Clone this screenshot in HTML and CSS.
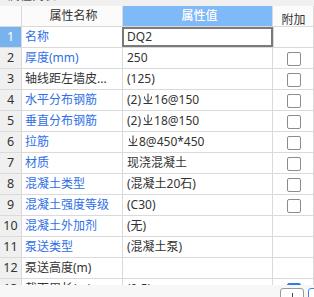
FILE: index.html
```html
<!DOCTYPE html>
<html>
<head>
<meta charset="utf-8">
<link rel="stylesheet" href="styles.css">
</head>
<body>
<div class="panel">
  <div class="title"><span>属性列表</span></div>
  <div class="grid">
    <div class="row head">
      <div class="c num"></div>
      <div class="c name center">属性名称</div>
      <div class="c val center sel">属性值</div>
      <div class="c add center">附加</div>
    </div>
    <div class="row">
      <div class="c num active">1</div>
      <div class="c name blue">名称</div>
      <div class="c val editing">DQ2</div>
      <div class="c add"></div>
    </div>
    <div class="row">
      <div class="c num">2</div>
      <div class="c name blue">厚度(mm)</div>
      <div class="c val">250</div>
      <div class="c add"><span class="cb"></span></div>
    </div>
    <div class="row">
      <div class="c num">3</div>
      <div class="c name">轴线距左墙皮...</div>
      <div class="c val">(125)</div>
      <div class="c add"><span class="cb"></span></div>
    </div>
    <div class="row">
      <div class="c num">4</div>
      <div class="c name blue">水平分布钢筋</div>
      <div class="c val">(2)<svg class="rb" viewBox="0 0 10 12"><path d="M5 0.5V10.5M1.5 3.5Q1.5 8 5 8Q8.5 8 8.5 3.5M0.5 10.5H9.5"/></svg>16@150</div>
      <div class="c add"><span class="cb"></span></div>
    </div>
    <div class="row">
      <div class="c num">5</div>
      <div class="c name blue">垂直分布钢筋</div>
      <div class="c val">(2)<svg class="rb" viewBox="0 0 10 12"><path d="M5 0.5V10.5M1.5 3.5Q1.5 8 5 8Q8.5 8 8.5 3.5M0.5 10.5H9.5"/></svg>18@150</div>
      <div class="c add"><span class="cb"></span></div>
    </div>
    <div class="row">
      <div class="c num">6</div>
      <div class="c name blue">拉筋</div>
      <div class="c val"><svg class="rb first" viewBox="0 0 10 12"><path d="M5 0.5V10.5M1.5 3.5Q1.5 8 5 8Q8.5 8 8.5 3.5M0.5 10.5H9.5"/></svg>8@450*450</div>
      <div class="c add"><span class="cb"></span></div>
    </div>
    <div class="row">
      <div class="c num">7</div>
      <div class="c name blue">材质</div>
      <div class="c val">现浇混凝土</div>
      <div class="c add"><span class="cb"></span></div>
    </div>
    <div class="row">
      <div class="c num">8</div>
      <div class="c name blue">混凝土类型</div>
      <div class="c val">(混凝土20石)</div>
      <div class="c add"><span class="cb"></span></div>
    </div>
    <div class="row">
      <div class="c num">9</div>
      <div class="c name blue">混凝土强度等级</div>
      <div class="c val">(C30)</div>
      <div class="c add"><span class="cb"></span></div>
    </div>
    <div class="row">
      <div class="c num">10</div>
      <div class="c name blue">混凝土外加剂</div>
      <div class="c val">(无)</div>
      <div class="c add"></div>
    </div>
    <div class="row">
      <div class="c num">11</div>
      <div class="c name blue">泵送类型</div>
      <div class="c val">(混凝土泵)</div>
      <div class="c add"></div>
    </div>
    <div class="row">
      <div class="c num">12</div>
      <div class="c name">泵送高度(m)</div>
      <div class="c val"></div>
      <div class="c add"></div>
    </div>
    <div class="row">
      <div class="c num">13</div>
      <div class="c name">截面周长(m)</div>
      <div class="c val">(0.5)</div>
      <div class="c add"><span class="cb on"></span></div>
    </div>
  </div>
  <div class="foot">
    <span class="btn"><span class="mark"></span></span>
    <span class="btn blue-btn"></span>
  </div>
</div>
</body>
</html>
```

FILE: styles.css
```css
html, body {
  margin: 0;
  padding: 0;
  background: #ffffff;
}
body {
  width: 314px;
  height: 297px;
  overflow: hidden;
  font-family: "Noto Sans", "Noto Sans CJK SC", sans-serif;
  font-size: 12px;
  color: #333333;
}
.panel {
  display: flex;
  flex-direction: column;
  height: 297px;
}
.title {
  height: 6px;
  overflow: hidden;
  background: #f0f0f0;
  padding-left: 8px;
}
.title span {
  display: block;
  margin-top: -14px;
  line-height: 20px;
  color: #555;
  font-size: 12px;
}
.grid {
  height: 280px;
  overflow: hidden;
  background: #fff;
}
.row {
  display: grid;
  grid-template-columns: 22px 101px 150px 41px;
  height: 21px;
}
.c {
  box-sizing: border-box;
  height: 21px;
  border-right: 1px solid #dadada;
  border-bottom: 1px solid #dadada;
  line-height: 20px;
  white-space: nowrap;
  overflow: hidden;
}
.num {
  background: #f0f0f0;
  text-align: center;
  color: #333;
  font-size: 12.5px;
}
.head .c {
  background: #fbfbfb;
  color: #333;
}
.head .num {
  background: #fbfbfb;
}
.center {
  text-align: center;
}
.head .sel {
  background: #7fb9f7;
  color: #ffffff;
  font-weight: 500;
}
.num.active {
  background: #79b3ef;
  color: #ffffff;
}
.name {
  padding-left: 3px;
}
.blue {
  color: #2f6fe6;
}
.val {
  padding-left: 4px;
}
.editing {
  box-shadow: inset 0 0 0 2px #7a7a7a;
  margin-left: -1px;
  padding-left: 5px;
  width: 152px;
  background: #fff;
  position: relative;
}
.add {
  display: flex;
  justify-content: center;
  padding-top: 4px;
  padding-left: 1px;
}
.cb {
  box-sizing: border-box;
  width: 14px;
  height: 14px;
  border: 1px solid #8c8c8c;
  border-radius: 2px;
  background: #fff;
}
.cb.on {
  background: #2f7fe3;
  border-color: #2f7fe3;
}
.rb {
  width: 10px;
  height: 12px;
  vertical-align: -1px;
  margin: 0 1px 0 2px;
  fill: none;
  stroke: #333;
  stroke-width: 1;
}
.rb.first {
  margin-left: 1px;
}
.foot {
  flex: 1;
  background: #f7f7f7;
  display: flex;
  justify-content: flex-end;
  align-items: flex-start;
  gap: 4px;
  padding-top: 3px;
  overflow: hidden;
  margin-top: -1px;
}
.btn {
  box-sizing: border-box;
  width: 24px;
  height: 14px;
  border: 1px solid #9a9a9a;
  border-radius: 3px;
  background: #fff;
  display: flex;
  justify-content: center;
  padding-top: 4px;
  margin-right: 0;
}
.mark {
  width: 1px;
  height: 4px;
  background: #444;
}
.blue-btn {
  width: 12px;
  border-color: #3a86e6;
  margin-right: -6px;
}
```
